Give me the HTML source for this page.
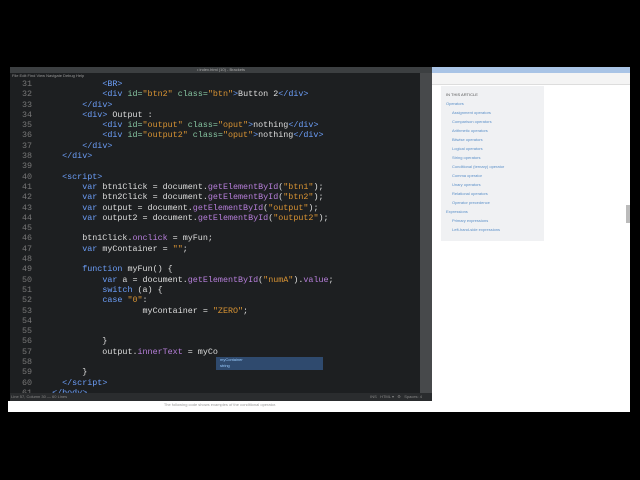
<!DOCTYPE html>
<html><head><style>
body{margin:0;width:640px;height:480px;background:#000;position:relative;overflow:hidden;font-family:"Liberation Sans",sans-serif}
.ed{position:absolute;left:10px;top:67px;width:422px;height:334px;background:#1d1f21}
.tb{position:absolute;left:0;top:0;width:422px;height:6px;background:#3c3f41;color:#aaa;font-size:4px;text-align:center;line-height:6px}
.mn{position:absolute;left:0;top:6px;width:410px;height:6px;color:#999;font-size:4px;line-height:6px;padding-left:2px}
.side{position:absolute;left:410px;top:6px;width:12px;height:320px;background:#47494b}
.code{position:absolute;left:0;top:12px;width:410px;height:314px;overflow:hidden;font-family:"Liberation Mono",monospace;font-size:8.4px;line-height:10.3px;color:#dedede;white-space:pre}
.ln{display:inline-block;width:22px;text-align:right;color:#777;margin-right:10px}
.t{color:#6c9ef8}.a{color:#85c3a0}.s{color:#d89333}.k{color:#6c9ef8}.p{color:#b77fdb}
.st{position:absolute;left:0;top:326px;width:422px;height:8px;background:#2a2c2e;color:#888;font-size:4px;line-height:8px}
.br{position:absolute;left:432px;top:67px;width:198px;height:345px;background:#fff}
.btb{position:absolute;left:0;top:0;width:198px;height:6px;background:#a9c4e6}
.adr{position:absolute;left:0;top:6px;width:198px;height:11px;background:#f4f4f4;border-bottom:1px solid #ddd}
.pan{position:absolute;left:9px;top:19px;width:103px;height:155px;background:#f0f1f3;font-size:4px;color:#5a8fc8}
.pan div{position:absolute;white-space:nowrap}
.sb{position:absolute;left:194px;top:138px;width:4px;height:18px;background:#bbb}
.white{position:absolute;left:8px;top:401px;width:424px;height:11px;background:#fff;font-size:4px;color:#999;text-align:center;line-height:8px}
.ac{position:absolute;left:216px;top:357px;width:107px;height:13px;background:#2f4a6e;font-size:4px;color:#9cf;line-height:6px;padding-left:4px;box-sizing:border-box}
</style></head><body>
<div class="ed">
<div class="tb">• index.html (10) - Brackets</div>
<div class="mn">File Edit Find View Navigate Debug Help</div>
<div class="side"></div>
<div class="code"><span class="ln">31</span>            <span class="t">&lt;BR&gt;</span>
<span class="ln">32</span>            <span class="t">&lt;div</span> <span class="a">id=</span><span class="s">"btn2"</span> <span class="a">class=</span><span class="s">"btn"</span><span class="t">&gt;</span>Button 2<span class="t">&lt;/div&gt;</span>
<span class="ln">33</span>        <span class="t">&lt;/div&gt;</span>
<span class="ln">34</span>        <span class="t">&lt;div&gt;</span> Output :
<span class="ln">35</span>            <span class="t">&lt;div</span> <span class="a">id=</span><span class="s">"output"</span> <span class="a">class=</span><span class="s">"oput"</span><span class="t">&gt;</span>nothing<span class="t">&lt;/div&gt;</span>
<span class="ln">36</span>            <span class="t">&lt;div</span> <span class="a">id=</span><span class="s">"output2"</span> <span class="a">class=</span><span class="s">"oput"</span><span class="t">&gt;</span>nothing<span class="t">&lt;/div&gt;</span>
<span class="ln">37</span>        <span class="t">&lt;/div&gt;</span>
<span class="ln">38</span>    <span class="t">&lt;/div&gt;</span>
<span class="ln">39</span>
<span class="ln">40</span>    <span class="t">&lt;script&gt;</span>
<span class="ln">41</span>        <span class="k">var</span> btn1Click = document.<span class="p">getElementById</span>(<span class="s">"btn1"</span>);
<span class="ln">42</span>        <span class="k">var</span> btn2Click = document.<span class="p">getElementById</span>(<span class="s">"btn2"</span>);
<span class="ln">43</span>        <span class="k">var</span> output = document.<span class="p">getElementById</span>(<span class="s">"output"</span>);
<span class="ln">44</span>        <span class="k">var</span> output2 = document.<span class="p">getElementById</span>(<span class="s">"output2"</span>);
<span class="ln">45</span>
<span class="ln">46</span>        btn1Click.<span class="p">onclick</span> = myFun;
<span class="ln">47</span>        <span class="k">var</span> myContainer = <span class="s">""</span>;
<span class="ln">48</span>
<span class="ln">49</span>        <span class="k">function</span> myFun() {
<span class="ln">50</span>            <span class="k">var</span> a = document.<span class="p">getElementById</span>(<span class="s">"numA"</span>).<span class="p">value</span>;
<span class="ln">51</span>            <span class="k">switch</span> (a) {
<span class="ln">52</span>            <span class="k">case</span> <span class="s">"0"</span>:
<span class="ln">53</span>                    myContainer = <span class="s">"ZERO"</span>;
<span class="ln">54</span>
<span class="ln">55</span>
<span class="ln">56</span>            }
<span class="ln">57</span>            output.<span class="p">innerText</span> = myCo
<span class="ln">58</span>
<span class="ln">59</span>        }
<span class="ln">60</span>    <span class="t">&lt;/script&gt;</span>
<span class="ln">61</span>  <span class="t">&lt;/body&gt;</span></div>
<div class="st">&nbsp;Line 57, Column 30 — 60 Lines<span style="float:right;margin-right:10px">INS &nbsp; HTML ▾ &nbsp; ⚙ &nbsp; Spaces: 4</span></div>
</div>
<div class="ac">myContainer<br>string</div>
<div class="br">
<div class="btb"></div>
<div class="adr"></div>
<div class="pan">
<div style="left:5px;top:6px;color:#555">IN THIS ARTICLE</div>
<div style="left:5px;top:15px">Operators</div>
<div style="left:11px;top:24px">Assignment operators</div>
<div style="left:11px;top:33px">Comparison operators</div>
<div style="left:11px;top:42px">Arithmetic operators</div>
<div style="left:11px;top:51px">Bitwise operators</div>
<div style="left:11px;top:60px">Logical operators</div>
<div style="left:11px;top:69px">String operators</div>
<div style="left:11px;top:78px">Conditional (ternary) operator</div>
<div style="left:11px;top:87px">Comma operator</div>
<div style="left:11px;top:96px">Unary operators</div>
<div style="left:11px;top:105px">Relational operators</div>
<div style="left:11px;top:114px">Operator precedence</div>
<div style="left:5px;top:123px">Expressions</div>
<div style="left:11px;top:132px">Primary expressions</div>
<div style="left:11px;top:141px">Left-hand-side expressions</div>
</div>
<div class="sb"></div>
</div>
<div class="white">The following code shows examples of the conditional operator.</div>
</body></html>
